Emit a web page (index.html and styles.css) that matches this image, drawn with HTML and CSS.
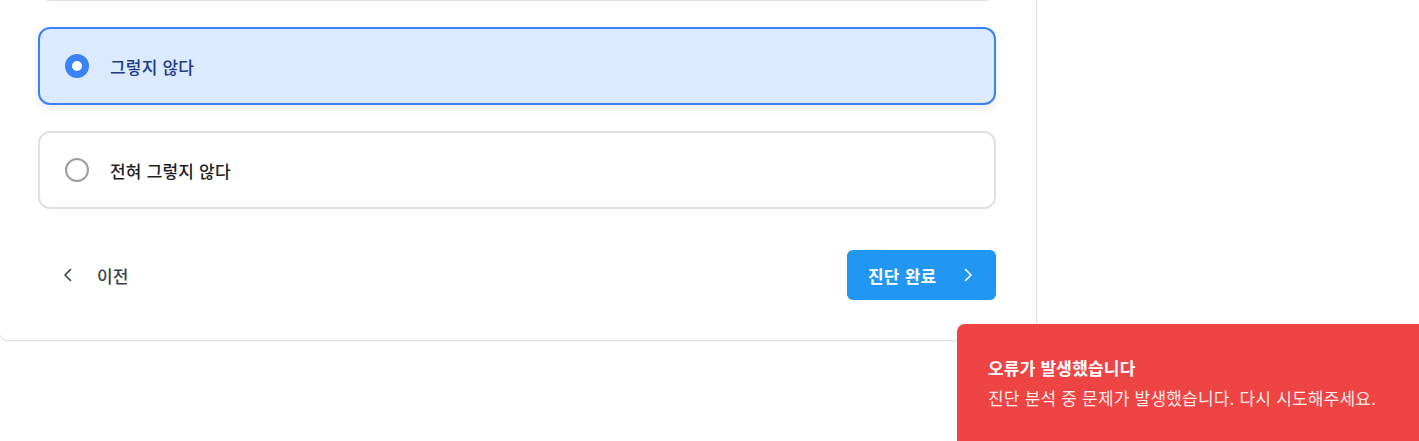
FILE: index.html
```html
<!DOCTYPE html>
<html lang="ko">
<head>
<meta charset="utf-8">
<title>진단</title>
<link rel="stylesheet" href="styles.css">
</head>
<body>
<div class="layout">
  <section class="card">
    <div class="options">
      <label class="option" aria-label="그렇다">
        <span class="radio"></span>
      </label>
      <label class="option option-selected">
        <span class="radio radio-on"></span>
        <span class="option-text">그렇지 않다</span>
      </label>
      <label class="option">
        <span class="radio"></span>
        <span class="option-text">전혀 그렇지 않다</span>
      </label>
    </div>
    <div class="nav">
      <button class="btn-prev" type="button">
        <svg class="chev" width="20" height="20" viewBox="0 0 20 20"><path d="M12.5 4.5 7 10l5.5 5.5" fill="none" stroke="#374151" stroke-width="1.6" stroke-linecap="round" stroke-linejoin="round"/></svg>
        <span>이전</span>
      </button>
      <button class="btn-next" type="button">
        <span>진단 완료</span>
        <svg class="chev" width="20" height="20" viewBox="0 0 20 20"><path d="M7.5 4.5 13 10l-5.5 5.5" fill="none" stroke="#ffffff" stroke-width="1.6" stroke-linecap="round" stroke-linejoin="round"/></svg>
      </button>
    </div>
  </section>
</div>
<div class="toast" role="alert">
  <div class="toast-title">오류가 발생했습니다</div>
  <div class="toast-msg">진단 분석 중 문제가 발생했습니다. 다시 시도해주세요.</div>
</div>
</body>
</html>
```
FILE: styles.css
```css
* { box-sizing: border-box; }
html, body {
  margin: 0;
  padding: 0;
  background: #ffffff;
  overflow: hidden;
  height: 441px;
}
body {
  font-family: "Noto Sans CJK KR", "Noto Sans", sans-serif;
  color: #1f2937;
}
.layout {
  display: flex;
}
.card {
  width: 1038px;
  margin-left: -1px;
  margin-top: -118px;
  border: 1px solid #e2e2e2;
  border-radius: 8px;
  background: #fff;
  padding: 40px 40px 40px 38px;
  box-shadow: 0 1px 2px rgba(0,0,0,0.04);
}
.options {
  display: flex;
  flex-direction: column;
  gap: 26px;
}
.option {
  height: 78px;
  border: 2px solid #e0e0e0;
  border-radius: 12px;
  display: flex;
  align-items: center;
  padding-left: 25px;
  background: #fff;
  cursor: pointer;
}
.option-selected {
  border-color: #3b82f6;
  background: #dbeafe;
  box-shadow: 0 4px 8px rgba(0,0,0,0.08);
}
.radio {
  width: 24px;
  height: 24px;
  border-radius: 50%;
  border: 2px solid #9e9e9e;
  flex: none;
}
.radio-on {
  border: 7px solid #3b82f6;
  background: #fff;
}
.option-text {
  margin-left: 21px;
  font-size: 17px;
  letter-spacing: 0.2px;
  font-weight: 500;
  color: #1f1f1f;
}
.option-selected .option-text {
  color: #1e3a8a;
}
.nav {
  display: flex;
  justify-content: space-between;
  align-items: center;
  margin-top: 41px;
}
.btn-prev {
  display: flex;
  align-items: center;
  height: 50px;
  border: none;
  background: transparent;
  padding: 0 0 0 20px;
  font-family: inherit;
  font-size: 17px;
  letter-spacing: 0.2px;
  font-weight: 500;
  color: #374151;
}
.btn-prev span {
  margin-left: 19px;
}
.btn-next {
  display: flex;
  align-items: center;
  width: 149px;
  height: 50px;
  border: none;
  border-radius: 6px;
  background: #2196f3;
  color: #fff;
  padding: 0 0 0 21px;
  font-family: inherit;
  font-size: 17px;
  letter-spacing: 0.2px;
  font-weight: 700;
}
.btn-next .chev {
  margin-left: 22px;
}
.chev {
  display: block;
  flex: none;
}
.toast {
  position: fixed;
  left: 957px;
  top: 324px;
  width: 490px;
  height: 150px;
  background: #ef4444;
  border-radius: 8px;
  padding: 31px 31px;
  color: #fff;
}
.toast-title {
  font-size: 17px;
  letter-spacing: 0.2px;
  font-weight: 700;
  line-height: 26px;
}
.toast-msg {
  margin-top: 4px;
  font-size: 17px;
  letter-spacing: 0.2px;
  line-height: 26px;
  color: rgba(255,255,255,0.92);
}
```
